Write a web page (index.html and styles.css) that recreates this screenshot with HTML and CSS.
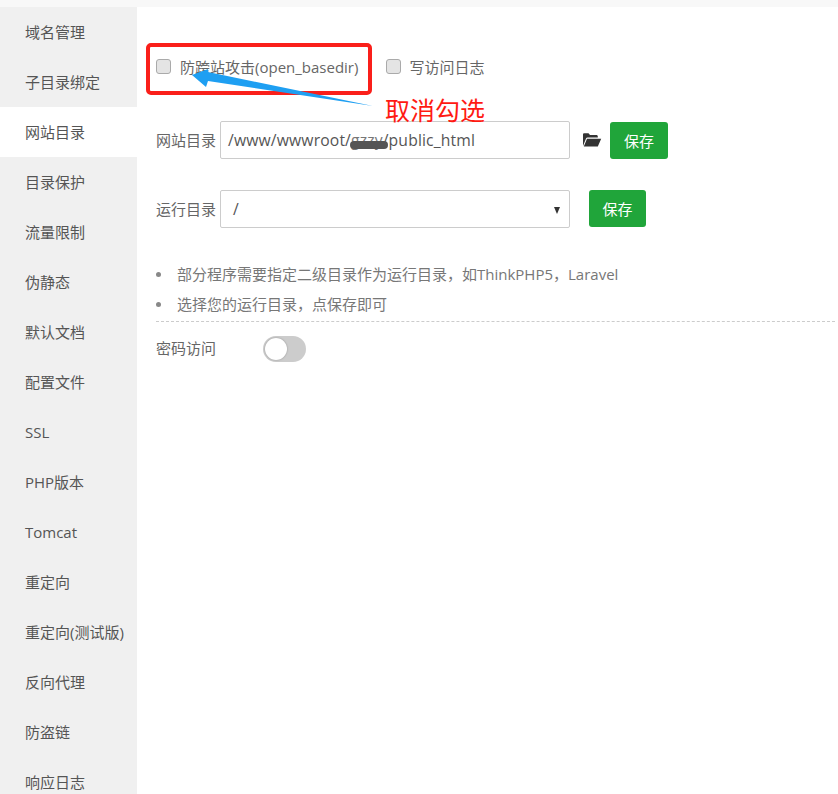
FILE: index.html
```html
<!DOCTYPE html>
<html lang="zh">
<head>
<meta charset="utf-8">
<title>网站目录</title>
<link rel="stylesheet" href="styles.css">
</head>
<body>
<div class="topstrip"></div>
<div class="layout">
  <ul class="side">
    <li>域名管理</li><li>子目录绑定</li><li class="active">网站目录</li><li>目录保护</li><li>流量限制</li><li>伪静态</li><li>默认文档</li><li>配置文件</li><li>SSL</li><li>PHP版本</li><li>Tomcat</li><li>重定向</li><li>重定向(测试版)</li><li>反向代理</li><li>防盗链</li><li>响应日志</li>
  </ul>
  <main class="main">
    <div class="checks">
      <label class="check check-first"><span class="box"></span>防跨站攻击(open_basedir)</label>
      <label class="check"><span class="box"></span>写访问日志</label>
    </div>
    <div class="row row-path">
      <span class="lbl">网站目录</span>
      <div class="field">/www/wwwroot/<span class="gap-name">gzzy</span>/public_html</div>
      <svg class="folder" viewBox="0 0 20 16" width="20" height="16"><path fill="#333" d="M1 14V2.5C1 1.7 1.6 1.2 2.3 1.2H6.500L8 3H14.500C15.200 3 15.800 3.600 15.800 4.300V5.500H5.500C4.800 5.500 4.300 5.800 4 6.400L1 14ZM5 6.800H19.200L15.800 14.500H1.800L5 6.800Z"/></svg>
      <button class="save">保存</button>
    </div>
    <div class="row row-run">
      <span class="lbl">运行目录</span>
      <div class="field select">/<span class="caret"></span></div>
      <button class="save save-run">保存</button>
    </div>
    <ul class="tips">
      <li>部分程序需要指定二级目录作为运行目录，如ThinkPHP5，Laravel</li>
      <li>选择您的运行目录，点保存即可</li>
    </ul>
    <div class="pass">
      <span class="lbl">密码访问</span>
      <span class="switch"><span class="knob"></span></span>
    </div>
  </main>
</div>
<div class="redbox"></div>
<svg class="arrow" viewBox="0 0 200 60" width="200" height="60"><path fill="#1e9ff2" d="M2 10 L18 4 L18 7 L183 41 L18 16 L16 22 Z"/></svg>
<div class="cancel">取消勾选</div>
<div class="smear"></div>
</body>
</html>
```
FILE: styles.css
```css
* { box-sizing: border-box; }
html, body { margin: 0; padding: 0; height: 794px; overflow: hidden; }
body { background: #fff; color: #666; font: 15px "Open Sans", "Noto Sans CJK SC", sans-serif; position: relative; }
.topstrip { height: 7px; background: #f8f8f8; }
.layout { display: flex; height: 787px; overflow: hidden; }
.side { list-style: none; margin: 0; padding: 0; width: 137px; background: #f0f0f0; flex: none; }
.side li { height: 50px; line-height: 50px; padding-left: 25px; color: #555; white-space: nowrap; }
.side li.active { background: #fff; }
.main { flex: 1; padding: 0 3px 0 19px; min-width: 0; }
.checks { display: flex; height: 36px; margin-top: 41px; align-items: center; }
.check { display: flex; align-items: center; color: #666; white-space: nowrap; }
.check-first { margin-right: 28px; }
.box { width: 15px; height: 15px; border: 1px solid #aaa; border-radius: 3px; background: #e4e4e4; margin-right: 8px; position: relative; }
.check-first .box { margin-right: 9px; }
.row { display: flex; align-items: center; height: 38px; }
.row-path { margin-top: 37px; }
.row-run { margin-top: 31px; }
.lbl { width: 64px; flex: none; white-space: nowrap; color: #666; line-height: 20px; padding-bottom: 1px; }
.field { width: 350px; height: 38px; border: 1px solid #ccc; border-radius: 2px; line-height: 36px; padding-left: 7px; color: #555; background: #fff; font-size: 15.700px; letter-spacing: .15px; white-space: nowrap; position: relative; }
.gap-name { color: #777; }
.select { padding-left: 12px; }
.caret { position: absolute; right: 9px; top: 16px; border-left: 3.500px solid transparent; border-right: 3.500px solid transparent; border-top: 7px solid #333; }
.folder { margin-left: 12px; flex: none; }
.save { width: 58px; height: 37px; margin-left: 8px; border: 0; border-radius: 3px; background: #20a53a; color: #fff; font: 15px "Open Sans", "Noto Sans CJK SC", sans-serif; padding: 0; }
.save-run { margin-left: 19px; width: 57px; align-self: flex-start; }
.tips { list-style: none; margin: 31px 0 0; padding: 0 0 0 21px; color: #777; }
.tips li { height: 30px; line-height: 30px; position: relative; white-space: nowrap; }
.tips li::before { content: ""; position: absolute; left: -21px; top: 13px; width: 5px; height: 5px; border-radius: 50%; background: #888; }
.pass { display: flex; align-items: center; border-top: 1px dashed #ccc; height: 56px; margin-top: 2px; padding-bottom: 2px; }
.pass .lbl { width: 107px; }
.switch { display: block; width: 43px; height: 26px; border-radius: 13px; background: #ccc; position: relative; }
.knob { position: absolute; left: 2px; top: 2px; width: 22px; height: 22px; border-radius: 50%; background: #fff; box-shadow: 0 0 2px rgba(0,0,0,.3); }
.redbox { position: absolute; left: 146px; top: 43px; width: 226px; height: 52px; border: 4px solid #fa1f1a; border-radius: 5px; pointer-events: none; }
.arrow { position: absolute; left: 190px; top: 65px; }
.cancel { position: absolute; left: 385px; top: 92px; font-size: 25px; line-height: 36px; color: #ff1a12; white-space: nowrap; }
.smear { position: absolute; left: 350px; top: 141px; width: 38px; height: 8px; border-radius: 4px; background: #555; }
```
